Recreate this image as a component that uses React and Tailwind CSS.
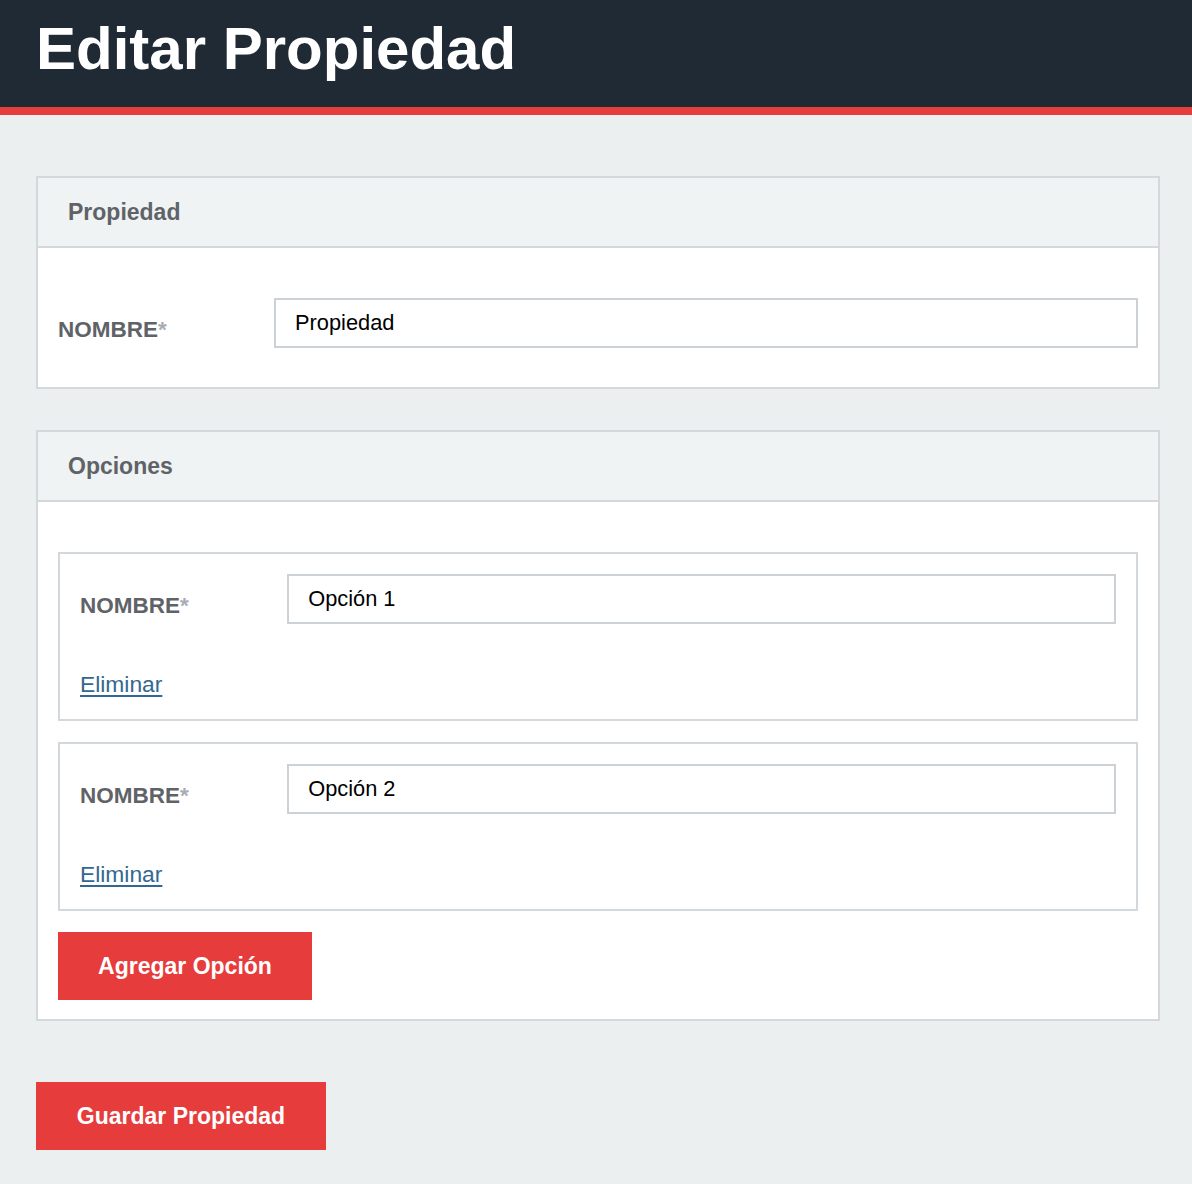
import React from "react";

function Label() {
  return (
    <div className="w-1/5 shrink-0 mt-[17px] leading-[30px] text-[22.5px] font-bold text-[#5f6368]">
      NOMBRE<span className="text-[#a9adb1]">*</span>
    </div>
  );
}

function Field({ value }) {
  return (
    <div className="flex items-start">
      <Label />
      <div className="w-4/5">
        <input
          readOnly
          value={value}
          className="block w-full h-[50px] border-2 border-[#ccd1d5] bg-white pl-[19px] pr-[19px] text-[21.8px] text-black outline-none font-['Liberation_Sans',Arial,sans-serif]"
        />
      </div>
    </div>
  );
}

function Card({ title, children, bodyClass }) {
  return (
    <div className="border-2 border-[#d3d8dc] bg-white">
      <div className="h-[70px] flex items-center px-[30px] bg-[#eff3f4] border-b-2 border-[#d3d8dc]">
        <span className="text-[23px] leading-[30px] font-bold text-[#5f6368]">{title}</span>
      </div>
      <div className={bodyClass}>{children}</div>
    </div>
  );
}

function OptionBox({ value }) {
  return (
    <div className="border-2 border-[#d3d8dc] p-[20px]">
      <Field value={value} />
      <div className="mt-[45px] h-[30px] leading-[30px] text-[22.8px]">
        <a href="#" className="text-[#336791] underline underline-offset-[3px] decoration-[2px]">
          Eliminar
        </a>
      </div>
    </div>
  );
}

export default function App() {
  return (
    <div className="min-h-[1184px] bg-[#ebeff0] font-['Liberation_Sans',Arial,sans-serif]">
      <header className="h-[115px] bg-[#1f2a34] border-b-8 border-[#e63c3c] pl-[36px] pt-[19px]">
        <h1 className="text-[60px] leading-[60px] font-bold text-white">Editar Propiedad</h1>
      </header>
      <main className="pl-[36px] pr-[32px] pt-[61px] pb-[34px]">
        <Card title="Propiedad" bodyClass="px-[20px] pt-[50px] pb-[39px]">
          <Field value="Propiedad" />
        </Card>
        <div className="mt-[41px]">
          <Card title="Opciones" bodyClass="px-[20px] pt-[50px] pb-[19px]">
            <OptionBox value="Opción 1" />
            <div className="mt-[21px]">
              <OptionBox value="Opción 2" />
            </div>
            <button className="mt-[21px] block w-[254px] h-[68px] bg-[#e63c3c] text-white text-[23px] font-bold">
              Agregar Opción
            </button>
          </Card>
        </div>
        <button className="mt-[61px] block w-[290px] h-[68px] bg-[#e63c3c] text-white text-[23px] font-bold">
          Guardar Propiedad
        </button>
      </main>
    </div>
  );
}
